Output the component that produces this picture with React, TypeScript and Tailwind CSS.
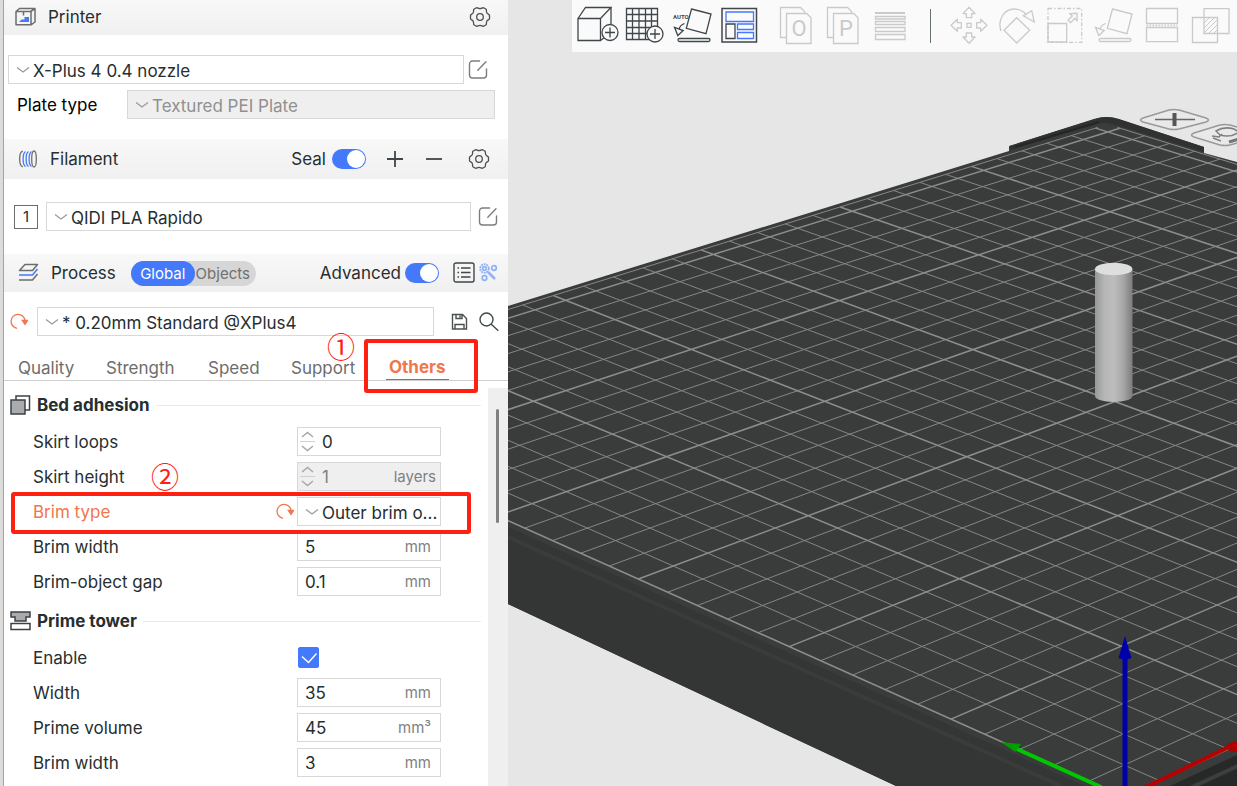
import type { ReactNode } from "react"

const project = (x: number, y: number) => {
  const w = 0.0402 * x + 0.0375 * y + 1
  return [(221.5 * x - 138.3 * y + 1125) / w, (-49.65 * x - 50.95 * y + 797) / w]
}

const segment = (x1: number, y1: number, x2: number, y2: number) => {
  const [ax, ay] = project(x1, y1)
  const [bx, by] = project(x2, y2)
  return `M${ax.toFixed(1)} ${ay.toFixed(1)}L${bx.toFixed(1)} ${by.toFixed(1)}`
}

// one cell is 10 mm, one unit is 50 mm
const END = 6.1
const steps = Array.from({ length: 31 }, (_, i) => i)
const gridPath = (bold: boolean) =>
  steps
    .filter((i) => (i % 5 === 0) === bold)
    .map((i) => segment(i / 5, 0, i / 5, END) + segment(0, i / 5, END, i / 5))
    .join("")

function Chevron({ className = "" }: { className?: string }) {
  return (
    <svg className={`pointer-events-none absolute top-1/2 -translate-y-1/2 ${className}`} width="14" height="8" viewBox="0 0 14 8" fill="none" stroke="#9a9a9a" strokeWidth="1.2">
      <path d="M1 1.5 7 6l6-4.5" />
    </svg>
  )
}

function Select({ label, value, className = "", disabled = false }: { label: string; value: string; className?: string; disabled?: boolean }) {
  return (
    <div className={`relative h-[29px] border border-[#d8d8d8] ${disabled ? "bg-[#efefef] text-[#909090]" : "bg-white text-[#262e30]"} ${className}`}>
      <Chevron className="left-[7px]" />
      <select aria-label={label} disabled={disabled} className="block h-full w-full appearance-none bg-transparent pt-0.5 pl-6 opacity-100 outline-none">
        <option>{value}</option>
      </select>
    </div>
  )
}

function Toggle({ id }: { id: string }) {
  return (
    <input
      id={id}
      type="checkbox"
      role="switch"
      defaultChecked
      className="relative h-5 w-[34px] shrink-0 appearance-none rounded-full bg-[#c8c8c8] before:absolute before:top-px before:left-px before:h-[18px] before:w-[18px] before:rounded-full before:bg-white checked:bg-[#4479fb] checked:before:left-[15px]"
    />
  )
}

function GearIcon() {
  return (
    <svg width="22" height="22" viewBox="0 0 22 22" fill="none" stroke="#4a5052" strokeWidth="1.3" strokeLinejoin="round">
      <path d="M7.4 1.8c1.2-.3 2 .9 3.6.9s2.4-1.2 3.6-.9l2.5 1.5c.8.9-.1 2.1.7 3.5s2.4 1.3 2.7 2.6v3.200c-.3 1.3-1.9 1.2-2.7 2.6s.1 2.6-.7 3.5l-2.5 1.5c-1.2.3-2-.9-3.6-.9s-2.4 1.2-3.6.9l-2.5-1.5c-.8-.9.1-2.1-.7-3.500S1.8 13.9 1.5 12.6V9.4c.3-1.3 1.9-1.2 2.7-2.6s-.1-2.6.7-3.5z" />
      <circle cx="11" cy="11" r="3.3" />
    </svg>
  )
}

function EditIcon() {
  return (
    <svg width="20" height="20" viewBox="0 0 20 20" fill="none" stroke="#7d7d7d" strokeWidth="1.4" strokeLinecap="round">
      <path d="M11.5 1H4.500A3 3 0 0 0 1.500 4v11a3 3 0 0 0 3 3h11a3 3 0 0 0 3-3V9M9.800 10.300 18 1.800" />
    </svg>
  )
}

function ResetIcon() {
  return (
    <svg width="18" height="18" viewBox="0 0 18 18" fill="none" stroke="#f0764d" strokeWidth="1.3">
      <path d="M7 15.300A7 7 0 1 1 15 7.500" />
      <path d="M12.300 7.500h5.200L15 11.300z" fill="#f0764d" />
    </svg>
  )
}

function PrinterIcon() {
  return (
    <svg width="21" height="20" viewBox="0 0 21 20" fill="none" stroke="#6d6d6d" strokeWidth="1.5" strokeLinejoin="round">
      <path d="M1 4.500 4.500 1.500H20v13.500l-4 2.800H1zM1 4.500h14.500M16 4.500v13M15.500 4.500 19.500 2" />
      <path d="M8.500 4.500v4" />
      <path d="m4 15 2.500-2.500h3V10H14v5z" fill="#4479fb" stroke="none" />
    </svg>
  )
}

function FilamentIcon() {
  return (
    <svg width="20" height="20" viewBox="0 0 20 20" fill="none" strokeWidth="1.3">
      <ellipse cx="16" cy="10" rx="2.300" ry="8" stroke="#6d6d6d" />
      <path d="M13.500 2.500c-3.200 2-3.200 13 0 15M10.500 2.500c-3.200 2-3.200 13 0 15M7.500 2.500c-3.200 2-3.200 13 0 15" stroke="#4479fb" />
      <path d="M4.800 2.200c-4.200 1-4.200 14.600 0 15.600" stroke="#6d6d6d" />
    </svg>
  )
}

function ProcessIcon() {
  return (
    <svg width="21" height="20" viewBox="0 0 21 20" fill="none" strokeWidth="1.5" strokeLinejoin="round">
      <path d="M7 1.500h12.500L14.500 7.500H1.500z" stroke="#6d6d6d" />
      <path d="M1 12h13.500l5-6" stroke="#4479fb" />
      <path d="M1 17h13.500l5-6" stroke="#6d6d6d" />
    </svg>
  )
}

function Mark({ children, className }: { children: ReactNode; className: string }) {
  return (
    <span className={`pointer-events-none absolute text-[28px] leading-6 text-[#fe2011] font-['Noto_Sans_CJK_JP',sans-serif] ${className}`}>{children}</span>
  )
}

function Header({ icon, title, children, className }: { icon: ReactNode; title: string; children: ReactNode; className: string }) {
  return (
    <div className={`flex items-center bg-linear-to-b from-[#f8f8f8] to-[#f0f0f0] ${className}`}>
      {icon}
      <h2 className="ml-3">{title}</h2>
      {children}
    </div>
  )
}

function GroupTitle({ icon, title }: { icon: ReactNode; title: string }) {
  return (
    <div className="flex h-[38px] items-center pr-[7px] pl-[6px]">
      {icon}
      <h3 className="ml-[6px] font-bold">{title}</h3>
      <div className="ml-[6px] h-px flex-1 bg-[#ebebeb]" />
    </div>
  )
}

function Row({ label, id, children }: { label: string; id: string; children: ReactNode }) {
  return (
    <div className="flex h-[35px] items-center pl-[29px]">
      <label htmlFor={id} className="w-[264px]">{label}</label>
      {children}
    </div>
  )
}

function Field({ id, value, unit, spin = false, disabled = false }: { id: string; value: string; unit?: ReactNode; spin?: boolean; disabled?: boolean }) {
  return (
    <div className={`flex h-[29px] w-36 items-center border border-[#d8d8d8] ${disabled ? "bg-[#efefef] text-[#808080]" : "bg-white"} ${spin ? "pr-1" : "pr-[9px]"}`}>
      {spin && (
        <svg className="ml-[2px] shrink-0" width="15" height="23" viewBox="0 0 15 23" fill="none" stroke="#a6a6a6" strokeWidth="1.4">
          <path d="m2 7 5.500-4.500L13 7M2 16l5.500 4.500L13 16" />
          <path d="M0 11.500h15" stroke="#d0d0d0" strokeWidth="1" />
        </svg>
      )}
      <input id={id} type="text" defaultValue={value} disabled={disabled} className="w-0 flex-1 bg-transparent pl-[7px] outline-none" />
      <span className="text-[15px] text-[#808080]">{unit}</span>
    </div>
  )
}

function Tool({ label, wide = false, off = false, children }: { label: string; wide?: boolean; off?: boolean; children: ReactNode }) {
  return (
    <button type="button" aria-label={label} disabled={off} className={`h-full shrink-0 ${wide ? "w-12" : "w-[47px]"}`}>
      <svg width="48" height="52" viewBox="0 0 48 52" fill="none" stroke={off ? "#cacaca" : "#3f474a"} strokeWidth="1.3" className="max-w-none overflow-visible">
        {children}
      </svg>
    </button>
  )
}

function LayFlat() {
  return (
    <>
      <path d="m24.500 9 19.500 5-5 19.700-19.700-5.400zM17.500 23.500c-3 1-5 3.500-5.500 6M7.500 27.300l8.700 3.300-5.400 5z" />
      <rect x="11" y="38.500" width="32" height="3" rx="1.500" />
    </>
  )
}

function Pages({ letter }: { letter: string }) {
  return (
    <>
      <path d="M14 37.500H8.500V7.500h20l4 4v2M14.500 13.500h20.300l4.200 4.200v25.800H14.500z" />
      <text x="27" y="36" textAnchor="middle" fontSize="22" fill="#cacaca" stroke="none" fontFamily="Roboto, sans-serif">{letter}</text>
    </>
  )
}

function Toolbar() {
  return (
    <div className="relative ml-16 flex h-[52px] overflow-hidden bg-[#fafafa] pl-px">
      <Tool label="Add">
        <path d="M5 18.500h22.500v22H5zM5 18.500 12.500 7.500H38L27.500 18.500M38 7.500V24M27.500 40.500l4-3" />
        <circle cx="37" cy="32.500" r="8" fill="#fafafa" />
        <path d="M37 27.500v10M32 32.500h10" />
      </Tool>
      <Tool label="Add plate">
        <path d="M6.500 8.500h31v31h-31zM12.500 8.500v31M19 8.500v31M25.500 8.500v31M31.500 8.500v31M6.500 14.500h31M6.500 21h31M6.500 27.500h31M6.500 33.500h31" />
        <circle cx="35" cy="34" r="8" fill="#fafafa" />
        <path d="M35 29v10M30 34h10" />
      </Tool>
      <Tool label="Auto orient">
        <LayFlat />
        <text x="6" y="19" fontSize="6" fontWeight="700" fill="#3f474a" stroke="none" fontFamily="Roboto, sans-serif">AUTO</text>
      </Tool>
      <Tool label="Arrange">
        <path d="M8 8.500h34.500V42H8z" strokeWidth="1.500" />
        <path d="M12 24h9v14.500h-9z" />
        <path d="M12 12h27.500v9.500H12zM23.500 24h16v5.500h-16zM23.500 32.500h16v6h-16z" stroke="#4479fb" />
      </Tool>
      <div className="w-[11px] shrink-0" />
      <Tool label="Split to objects" off>
        <Pages letter="O" />
      </Tool>
      <Tool label="Split to parts" off>
        <Pages letter="P" />
      </Tool>
      <Tool label="Variable layer height" off>
        <path d="M9 13h30" strokeWidth="2" />
        <path d="M9.500 16.500h29.500v2.500H9.500zM9.500 21.500h29.500v3H9.500zM9.500 27.500h29.500v4H9.500zM9.500 34.500h29.500v5H9.500z" />
      </Tool>
      <div className="my-[9px] mr-[13px] ml-[17px] w-px shrink-0 bg-[#687174]" />
      <Tool label="Move" wide off>
        <path d="M23 23.300h4v4h-4z" />
        {[0, 90, 180, 270].map((angle) => (
          <path key={angle} transform={`rotate(${angle} 25 25.3)`} d="m25 7.300 6 6.300h-3.300v4h-5.400v-4H19z" strokeLinejoin="round" />
        ))}
      </Tool>
      <Tool label="Rotate" wide off>
        <path d="m24.700 17.700 13 12.600-13 12.700L12 30.300zM9 31C5 19 13 9 22 9c6 0 10 2.500 12.700 6M39.700 10.700l-8.400 5 11 6.300z" />
      </Tool>
      <Tool label="Scale" wide off>
        <path d="M8 8.500h33.700v33.800H8z" strokeDasharray="4 2 1.500 2" />
        <path d="M8 23.500h18.700V42H8zM30 13.700l7-.4v7.400l-2.300-2.400-4 4.400-2.700-2.400 4.300-4.300z" />
      </Tool>
      <Tool label="Place on face" wide off>
        <LayFlat />
      </Tool>
      <Tool label="Cut" wide off>
        <path d="M10.500 8.500h31v15h-31zM10.500 27.500h31v14.200h-31z" />
        <path d="M10.500 25.500h31" strokeDasharray="1.500 1.500" />
      </Tool>
      <Tool label="Boolean" wide off>
        <path d="M20 8.700h25v24.800H20zM8.500 17.500h25v25h-25z" />
        <path d="m20 23 5.500-5.500M20 28l10.500-10.500M20 33l13.500-13.500M25 33l8.500-8.500M30 33l3.500-3.500" strokeWidth="1" />
      </Tool>
    </div>
  )
}

function Scene() {
  return (
    <svg className="absolute inset-0 h-full w-full" viewBox="508 0 729 786" preserveAspectRatio="xMinYMin slice" aria-label="Build plate">
      <defs>
        <linearGradient id="rod">
          <stop offset="0" stopColor="#979797" />
          <stop offset="0.25" stopColor="#b6b6b6" />
          <stop offset="0.5" stopColor="#bdbdbd" />
          <stop offset="0.75" stopColor="#a8a8a8" />
          <stop offset="1" stopColor="#7c7c7c" />
        </linearGradient>
      </defs>
      <path d="M508 306 1009 151v-5l85-27q12-4 24 0l86 28v6l33 9v624H896L508 604z" fill="#3a3c3b" />
      <path d="M1010 150v-4l85-27q12-4 24 0l85 28v5l-92-28q-7-2-14 0z" fill="#303231" />
      <path d="m1015 147 84-25" stroke="#252726" strokeWidth="2" />
      <path d="M508 527 1085 786H896L508 604z" fill="#343635" />
      <path d="m508 537 553 249" stroke="#3a3c3b" strokeWidth="4" />
      <path d="M1170 786 1237 755v31z" fill="#272928" />
      <path d="m1190 788 50-23" stroke="#3d3f3e" strokeWidth="4" />

      <path d={gridPath(false)} stroke="#858785" strokeWidth="1" fill="none" />
      <path d={gridPath(true)} stroke="#8c8e8c" strokeWidth="1.5" fill="none" />
      <path d={segment(0, END, END - 0.08, END) + segment(END, 0, END, END - 0.08)} stroke="#858785" fill="none" />

      <path d="m1143 118 26-8q5-1 10 0l27 8q5 2 0 4l-27 7q-5 1-10 0l-26-7q-5-2 0-4z" fill="#e9e9e9" stroke="#999" strokeWidth="1.5" />
      <path d="M1155 119.500h40" stroke="#666" strokeWidth="1.500" />
      <path d="M1174.500 113v13" stroke="#555" strokeWidth="4" />
      <path d="m1194 133 26-8q5-1 10 0l27 8q5 2 0 4l-27 8q-5 1-10 0l-26-8q-5-2 0-4z" fill="#e9e9e9" stroke="#999" strokeWidth="1.5" />
      <path d="M1216 131q8-5 18-2l5 3q-8 6-19 3zM1212 136l7 1 3-3M1213 138l8 3" stroke="#808080" strokeWidth="1.500" fill="none" />
      <path d="m1229 142 10-3" stroke="#777" strokeWidth="3" />

      <path d="M1095 269v127a18.500 6 0 0 0 37.500 0V269z" fill="url(#rod)" />
      <ellipse cx="1113.700" cy="269" rx="18.700" ry="6.200" fill="#dedede" />

      <path d="m1017 749 84 38" stroke="#00c800" strokeWidth="4" />
      <path d="m1001 742 20 2-6 8z" fill="#009c00" />
      <path d="m1144 788 87-42" stroke="#b90000" strokeWidth="4" />
      <path d="m1227 744 12-4v12l-10-1z" fill="#b00000" />
      <path d="M1125 655v131" stroke="#0000a8" strokeWidth="5" />
      <path d="m1125 636 6.500 22q-6.500 3-13 0z" fill="#0000a8" />
    </svg>
  )
}

export default function App() {
  return (
    <div className="flex h-screen overflow-hidden bg-[#e6e6e6] font-[Inter,sans-serif] text-[17px] leading-6 text-[#262e30]">
      <div className="w-1 shrink-0 border-r border-[#a3a3a3] bg-[#dcdcdc]" />
      <aside className="flex w-[504px] shrink-0 flex-col bg-white">
        <Header icon={<PrinterIcon />} title="Printer" className="h-[35px] pr-[17px] pb-0.5 pl-[11px]">
          <button type="button" aria-label="Printer settings" className="ml-auto">
            <GearIcon />
          </button>
        </Header>
        <div className="mt-5 flex items-center gap-1 pr-5 pl-1">
          <Select label="Printer preset" value="X-Plus 4 0.4 nozzle" className="flex-1" />
          <button type="button" aria-label="Edit printer">
            <EditIcon />
          </button>
        </div>
        <div className="mt-[6px] mb-5 flex items-center px-[13px]">
          <span className="w-[110px] text-black">Plate type</span>
          <Select label="Plate type" value="Textured PEI Plate" className="flex-1" disabled />
        </div>

        <Header icon={<FilamentIcon />} title="Filament" className="h-10 pr-[18px] pl-[14px]">
          <label htmlFor="seal" className="mr-[6px] ml-auto">Seal</label>
          <Toggle id="seal" />
          <button type="button" aria-label="Add filament" className="ml-5">
            <svg width="18" height="18" viewBox="0 0 18 18" stroke="#3f474a" strokeWidth="1.8"><path d="M9 1v16M1 9h16" /></svg>
          </button>
          <button type="button" aria-label="Remove filament" className="mr-[25px] ml-[21px]">
            <svg width="18" height="18" viewBox="0 0 18 18" stroke="#3f474a" strokeWidth="1.8"><path d="M1 9h16" /></svg>
          </button>
          <button type="button" aria-label="Filament settings">
            <GearIcon />
          </button>
        </Header>
        <div className="my-[23px] flex items-center px-[10px]">
          <button type="button" className="h-6 w-6 border border-[#6d6d6d] text-[15px] leading-[22px]">1</button>
          <Select label="Filament preset" value="QIDI PLA Rapido" className="mr-[7px] ml-2 flex-1" />
          <button type="button" aria-label="Edit filament">
            <EditIcon />
          </button>
        </div>

        <Header icon={<ProcessIcon />} title="Process" className="h-[38px] pr-[9px] pl-[14px]">
          <div className="ml-[15px] flex h-[25px] rounded-full bg-[#d6d6d6] text-[15px] leading-[25px]">
            <button type="button" className="w-16 rounded-full bg-[#4479fb] text-white">Global</button>
            <button type="button" className="w-[61px] pr-[5px] text-[#707070]">Objects</button>
          </div>
          <label htmlFor="advanced" className="mr-1 ml-auto">Advanced</label>
          <Toggle id="advanced" />
          <button type="button" aria-label="Parameter list" className="ml-[14px]">
            <svg width="22" height="22" viewBox="0 0 22 22" fill="none" stroke="#3f474a" strokeWidth="1.4">
              <rect x="1" y="1" width="20" height="19" rx="2" />
              <path d="M8 6h9.500M8 10.500h9.500M8 15h9.500M4.500 6H6M4.500 10.500H6M4.500 15H6" />
            </svg>
          </button>
          <button type="button" aria-label="Compare presets" className="ml-1">
            <svg width="20" height="20" viewBox="0 0 20 20" fill="none" stroke="#8fb0fb" strokeWidth="1.7">
              <circle cx="5.500" cy="5.500" r="4.300" strokeDasharray="2 .7" />
              <circle cx="5.500" cy="5.500" r="1.800" />
              <circle cx="15" cy="5" r="2.300" />
              <circle cx="5.500" cy="15" r="2.300" />
              <path d="m9 9 7 7" strokeWidth="2.500" />
            </svg>
          </button>
        </Header>
        <div className="mt-[15px] flex items-center pr-[9px] pl-[6px]">
          <button type="button" aria-label="Reset preset">
            <ResetIcon />
          </button>
          <Select label="Process preset" value="* 0.20mm Standard @XPlus4" className="mr-[17px] ml-[9px] flex-1" />
          <button type="button" aria-label="Save preset">
            <svg width="18" height="18" viewBox="0 0 18 18" fill="none" stroke="#4a5052" strokeWidth="1.4">
              <path d="M1.500 1.500h10l4 4v10.500h-14zM5 1.500v4h6v-4M4 16v-4.500h9V16M9 2.500v2" />
            </svg>
          </button>
          <button type="button" aria-label="Search settings" className="ml-[10px]">
            <svg width="20" height="20" viewBox="0 0 20 20" fill="none" stroke="#3f474a" strokeWidth="1.4">
              <circle cx="7.500" cy="7.500" r="6.500" />
              <path d="m12.300 12.200 7 6.500" />
            </svg>
          </button>
        </div>

        <nav className="relative mt-[9px] flex h-9 items-end border-b border-[#cfcfcf] pl-[14px] text-[#6d6d6d]">
          <button type="button" className="w-[88px] text-left">Quality</button>
          <button type="button" className="w-[102px] text-left">Strength</button>
          <button type="button" className="w-[83px] text-left">Speed</button>
          <button type="button" className="w-[95px] text-left">Support</button>
          <button type="button" className="border-b border-[#4479fb] px-[3px] leading-[23px] font-bold text-[#f0764d]">Others</button>
          <Mark className="-top-[11px] left-[323px]">①</Mark>
          <div className="pointer-events-none absolute -top-[6px] left-[360px] z-10 h-[54px] w-[114px] rounded-[3px] border-4 border-[#fe2011]" />
        </nav>

        <div className="flex min-h-0 flex-1">
          <div className="flex flex-1 flex-col gap-[3px] overflow-hidden pt-[5px]">
            <section>
              <GroupTitle
                title="Bed adhesion"
                icon={
                  <svg width="21" height="20" viewBox="0 0 21 20" stroke="#3a4245" strokeWidth="1.5">
                    <path d="M6 1h13.500v14H6z" fill="#fff" />
                    <path d="M1 5h14v14H1z" fill="#ababab" />
                  </svg>
                }
              />
              <Row label="Skirt loops" id="loops">
                <Field id="loops" value="0" spin />
              </Row>
              <div className="relative">
                <Row label="Skirt height" id="height">
                  <Field id="height" value="1" unit="layers" spin disabled />
                </Row>
                <Mark className="top-[5px] left-[147px]">②</Mark>
              </div>
              <div className="relative flex h-[35px] items-center pl-[29px]">
                <span className="w-[243px] text-[#f0764d]">Brim type</span>
                <button type="button" aria-label="Reset brim type" className="mr-[3px]">
                  <ResetIcon />
                </button>
                <Select label="Brim type" value="Outer brim o..." className="w-36" />
                <div className="pointer-events-none absolute -top-[2px] left-[7px] z-10 h-[42px] w-[460px] rounded-[3px] border-4 border-[#fe2011]" />
              </div>
              <Row label="Brim width" id="brim-width">
                <Field id="brim-width" value="5" unit="mm" />
              </Row>
              <Row label="Brim-object gap" id="gap">
                <Field id="gap" value="0.1" unit="mm" />
              </Row>
            </section>
            <section>
              <GroupTitle
                title="Prime tower"
                icon={
                  <svg width="21" height="20" viewBox="0 0 21 20" stroke="#3a4245" strokeWidth="1.5">
                    <path d="M1 1h19v5h-4v4H5V6H1z" fill="#ababab" />
                    <path d="M1 12.500h19v6H1z" fill="#fff" />
                  </svg>
                }
              />
              <Row label="Enable" id="enable">
                <span className="relative ml-px flex">
                  <input id="enable" type="checkbox" defaultChecked className="h-[21px] w-[21px] appearance-none rounded-xs border border-[#4479fb] checked:bg-[#4479fb]" />
                  <svg className="pointer-events-none absolute inset-0" width="21" height="21" viewBox="0 0 21 21" fill="none" stroke="#fff" strokeWidth="1.5">
                    <path d="m4 9.500 6.500 6 8-9" />
                  </svg>
                </span>
              </Row>
              <Row label="Width" id="tower-width">
                <Field id="tower-width" value="35" unit="mm" />
              </Row>
              <Row label="Prime volume" id="volume">
                <Field id="volume" value="45" unit="mm³" />
              </Row>
              <Row label="Brim width" id="tower-brim">
                <Field id="tower-brim" value="3" unit="mm" />
              </Row>
            </section>
          </div>
          <div className="mt-[7px] w-5 bg-[#efefef] pt-[21px]">
            <div className="ml-2 h-[114px] w-[3px] rounded-full bg-[#808080]" />
          </div>
        </div>
      </aside>

      <main className="relative min-w-0 flex-1">
        <Scene />
        <Toolbar />
      </main>
    </div>
  )
}
